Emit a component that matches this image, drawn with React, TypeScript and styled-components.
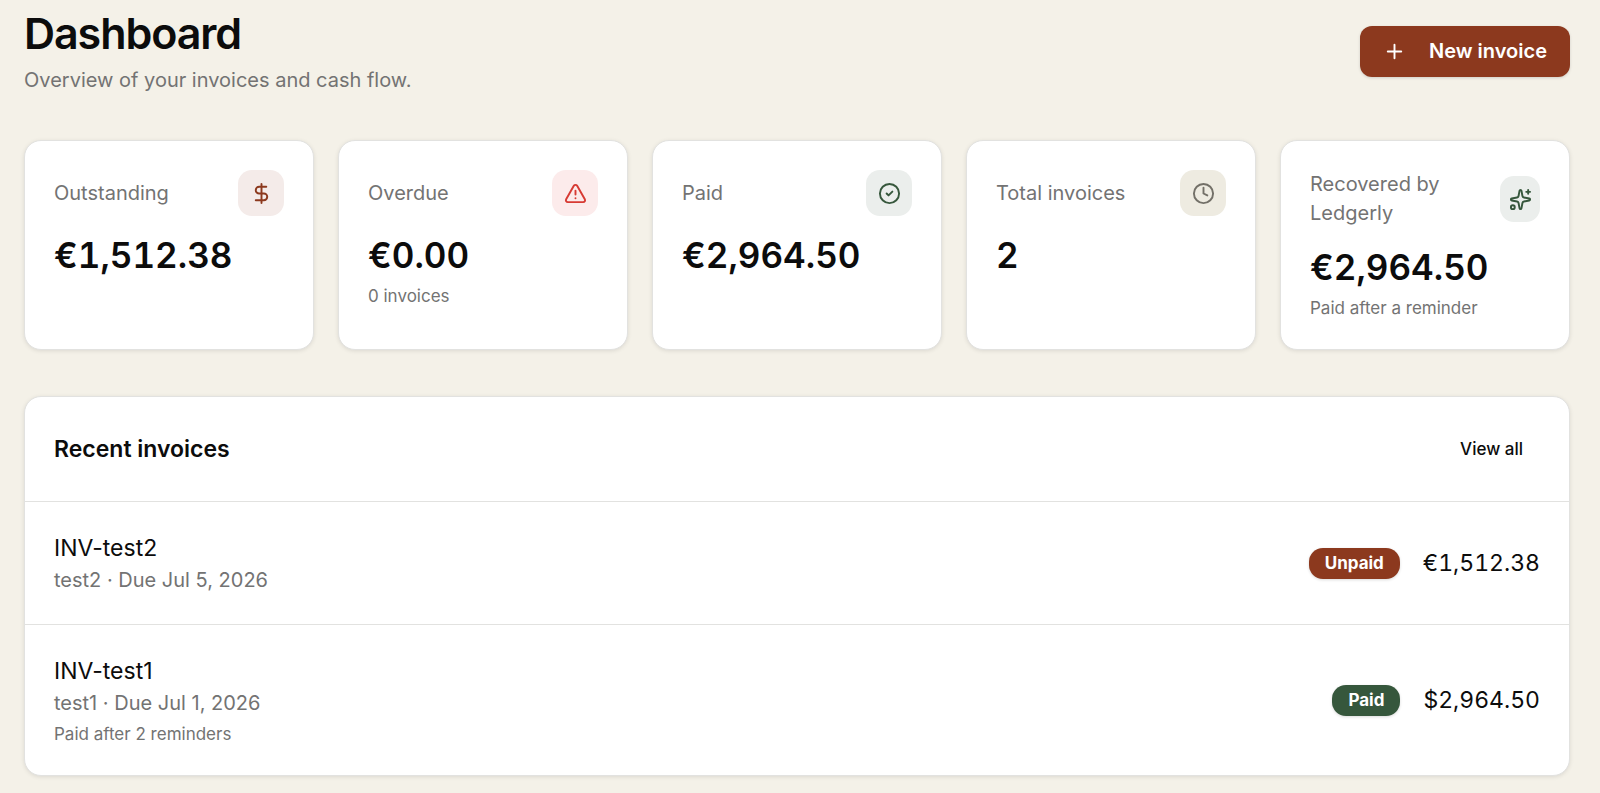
import React from "react";
import styled, { createGlobalStyle } from "styled-components";
import { CircleCheck, Clock, DollarSign, Plus, Sparkles, TriangleAlert } from "lucide-react";
import type { LucideIcon } from "lucide-react";

const color = {
  page: "#f4f1e8",
  ink: "#0c0c0c",
  muted: "#737373",
  line: "#e2e2e0",
  rust: "#8c391e",
  green: "#36573c",
  red: "#d73a33",
};

const GlobalStyle = createGlobalStyle`
  *, *::before, *::after { box-sizing: border-box; }
  body {
    margin: 0;
    background: ${color.page};
    color: ${color.ink};
    font-family: Inter, "Liberation Sans", sans-serif;
    font-size: 23px;
    line-height: 35px;
  }
  h1, h2, p, ul { margin: 0; padding: 0; }
`;

const Page = styled.main`
  padding: 7px 30px 18px 24px;
`;

const Header = styled.header`
  display: flex;
  align-items: center;
  justify-content: space-between;
  margin-bottom: 45px;
`;

const Title = styled.h1`
  font-size: 43px;
  line-height: 52px;
  font-weight: 600;
  letter-spacing: -0.025em;
`;

const Muted = styled.p<{ $small?: boolean }>`
  color: ${color.muted};
  font-size: ${(p) => (p.$small ? 17 : 20)}px;
  line-height: ${(p) => (p.$small ? 23 : 29)}px;
`;

const Subtitle = styled(Muted)`
  margin-top: 7px;
`;

const PrimaryButton = styled.button`
  display: flex;
  align-items: center;
  gap: 23px;
  height: 51px;
  padding: 0 23px;
  border: 0;
  border-radius: 12px;
  background: ${color.rust};
  color: #fff;
  font: 600 20px/29px Inter, "Liberation Sans", sans-serif;
  box-shadow: 0 1px 3px rgba(0, 0, 0, 0.15);
  cursor: pointer;
`;

const surface = `
  background: #fff;
  border: 1px solid ${color.line};
  border-radius: 17px;
  box-shadow: 0 1px 4px rgba(0, 0, 0, 0.1);
`;

const Stats = styled.section`
  display: grid;
  grid-template-columns: repeat(5, minmax(0, 1fr));
  gap: 24px;
  margin-bottom: 46px;
`;

const StatCard = styled.article`
  ${surface}
  padding: 29px;
`;

const StatTop = styled.div`
  display: flex;
  align-items: center;
  justify-content: space-between;
  margin-bottom: 16px;
`;

const Tile = styled.span<{ $fg: string; $bg: string; $narrow?: boolean }>`
  display: flex;
  flex: none;
  align-items: center;
  justify-content: center;
  width: ${(p) => (p.$narrow ? 40 : 46)}px;
  height: 46px;
  border-radius: 14px;
  color: ${(p) => p.$fg};
  background: ${(p) => p.$bg};
`;

const StatValue = styled.p`
  font-size: 35px;
  line-height: 47px;
  font-weight: 600;
  font-variant-numeric: tabular-nums;
`;

const StatNote = styled(Muted)`
  margin-top: 6px;
`;

const Panel = styled.section`
  ${surface}
`;

const PanelHeader = styled.div`
  display: flex;
  align-items: center;
  justify-content: space-between;
  padding: 29px;
  border-bottom: 1px solid ${color.line};
`;

const PanelTitle = styled.h2`
  font-size: 23px;
  line-height: 35px;
  font-weight: 600;
`;

const ViewAll = styled.a`
  padding: 0 17px;
  color: ${color.ink};
  font-size: 17px;
  line-height: 46px;
  font-weight: 500;
  text-decoration: none;
`;

const Rows = styled.ul`
  list-style: none;
`;

const Row = styled.li`
  display: flex;
  align-items: center;
  justify-content: space-between;
  padding: 29px;

  & + & {
    border-top: 1px solid ${color.line};
  }
`;

const RowNote = styled(Muted)`
  margin-top: 5px;
`;

const RowEnd = styled.div`
  display: flex;
  align-items: center;
  gap: 23px;
  font-variant-numeric: tabular-nums;
`;

const Badge = styled.span<{ $bg: string }>`
  padding: 4px 16px;
  border-radius: 14px;
  background: ${(p) => p.$bg};
  color: #fff;
  font-size: 17px;
  line-height: 23px;
  font-weight: 700;
  box-shadow: 0 1px 3px rgba(0, 0, 0, 0.15);
`;

type Stat = {
  label: string;
  value: string;
  note?: string;
  icon: LucideIcon;
  fg: string;
  bg: string;
  narrow?: boolean;
};

const stats: Stat[] = [
  { label: "Outstanding", value: "€1,512.38", icon: DollarSign, fg: color.rust, bg: "#f4ebe9" },
  { label: "Overdue", value: "€0.00", note: "0 invoices", icon: TriangleAlert, fg: color.red, bg: "#fcebeb" },
  { label: "Paid", value: "€2,964.50", icon: CircleCheck, fg: color.green, bg: "#ebeeec" },
  { label: "Total invoices", value: "2", icon: Clock, fg: "#737068", bg: "#eeebe1" },
  {
    label: "Recovered by Ledgerly",
    value: "€2,964.50",
    note: "Paid after a reminder",
    icon: Sparkles,
    fg: color.green,
    bg: "#ebeeec",
    narrow: true,
  },
];

const invoices = [
  { id: "INV-test2", detail: "test2 · Due Jul 5, 2026", status: "Unpaid", amount: "€1,512.38" },
  {
    id: "INV-test1",
    detail: "test1 · Due Jul 1, 2026",
    note: "Paid after 2 reminders",
    status: "Paid",
    amount: "$2,964.50",
  },
];

export default function App() {
  return (
    <Page>
      <GlobalStyle />
      <Header>
        <div>
          <Title>Dashboard</Title>
          <Subtitle>Overview of your invoices and cash flow.</Subtitle>
        </div>
        <PrimaryButton type="button">
          <Plus size={23} strokeWidth={2} aria-hidden />
          New invoice
        </PrimaryButton>
      </Header>

      <Stats>
        {stats.map(({ label, value, note, icon: Icon, fg, bg, narrow }) => (
          <StatCard key={label}>
            <StatTop>
              <Muted>{label}</Muted>
              <Tile $fg={fg} $bg={bg} $narrow={narrow}>
                <Icon size={23} strokeWidth={2} aria-hidden />
              </Tile>
            </StatTop>
            <StatValue>{value}</StatValue>
            {note && <StatNote $small>{note}</StatNote>}
          </StatCard>
        ))}
      </Stats>

      <Panel>
        <PanelHeader>
          <PanelTitle>Recent invoices</PanelTitle>
          <ViewAll href="#invoices">View all</ViewAll>
        </PanelHeader>
        <Rows>
          {invoices.map((invoice) => (
            <Row key={invoice.id}>
              <div>
                <p>{invoice.id}</p>
                <Muted>{invoice.detail}</Muted>
                {invoice.note && <RowNote $small>{invoice.note}</RowNote>}
              </div>
              <RowEnd>
                <Badge $bg={invoice.status === "Paid" ? color.green : color.rust}>{invoice.status}</Badge>
                <span>{invoice.amount}</span>
              </RowEnd>
            </Row>
          ))}
        </Rows>
      </Panel>
    </Page>
  );
}
